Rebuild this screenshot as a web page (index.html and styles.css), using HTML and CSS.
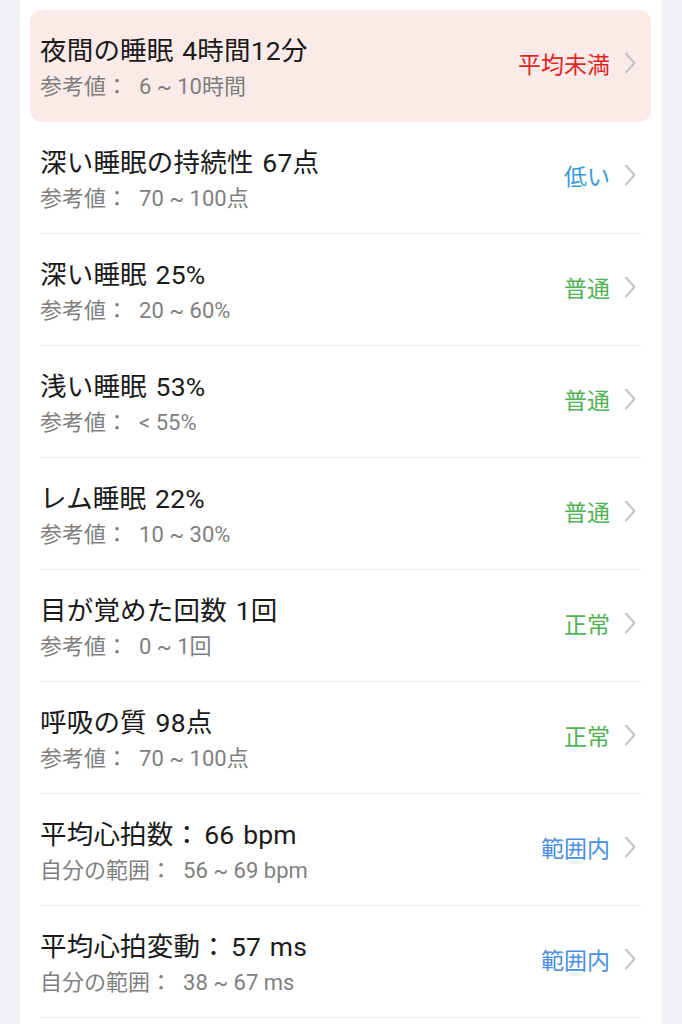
FILE: index.html
```html
<!DOCTYPE html>
<html lang="ja">
<head>
  <meta charset="UTF-8">
  <meta name="viewport" content="width=device-width, initial-scale=1.0">
  <title>睡眠の詳細</title>
  <link rel="stylesheet" href="styles.css">
</head>
<body>
<div class="card">
  <div class="row alert">
    <div class="row-inner">
      <div class="info">
        <div class="title">夜間の睡眠 4時間12分</div>
        <div class="ref">参考値：<span class="v">6 ~ 10時間</span></div>
      </div>
      <span class="status red">平均未満</span>
      <svg class="chev" viewBox="0 0 12 24"><path d="M1.5 2 L10.5 12 L1.5 22"/></svg>
    </div>
  </div>
  <div class="row">
    <div class="row-inner">
      <div class="info">
        <div class="title">深い睡眠の持続性 67点</div>
        <div class="ref">参考値：<span class="v">70 ~ 100点</span></div>
      </div>
      <span class="status low">低い</span>
      <svg class="chev" viewBox="0 0 12 24"><path d="M1.5 2 L10.5 12 L1.5 22"/></svg>
    </div>
  </div>
  <div class="row">
    <div class="row-inner">
      <div class="info">
        <div class="title">深い睡眠 25%</div>
        <div class="ref">参考値：<span class="v">20 ~ 60%</span></div>
      </div>
      <span class="status ok">普通</span>
      <svg class="chev" viewBox="0 0 12 24"><path d="M1.5 2 L10.5 12 L1.5 22"/></svg>
    </div>
  </div>
  <div class="row">
    <div class="row-inner">
      <div class="info">
        <div class="title">浅い睡眠 53%</div>
        <div class="ref">参考値：<span class="v">&lt; 55%</span></div>
      </div>
      <span class="status ok">普通</span>
      <svg class="chev" viewBox="0 0 12 24"><path d="M1.5 2 L10.5 12 L1.5 22"/></svg>
    </div>
  </div>
  <div class="row">
    <div class="row-inner">
      <div class="info">
        <div class="title">レム睡眠 22%</div>
        <div class="ref">参考値：<span class="v">10 ~ 30%</span></div>
      </div>
      <span class="status ok">普通</span>
      <svg class="chev" viewBox="0 0 12 24"><path d="M1.5 2 L10.5 12 L1.5 22"/></svg>
    </div>
  </div>
  <div class="row">
    <div class="row-inner">
      <div class="info">
        <div class="title">目が覚めた回数 1回</div>
        <div class="ref">参考値：<span class="v">0 ~ 1回</span></div>
      </div>
      <span class="status ok">正常</span>
      <svg class="chev" viewBox="0 0 12 24"><path d="M1.5 2 L10.5 12 L1.5 22"/></svg>
    </div>
  </div>
  <div class="row">
    <div class="row-inner">
      <div class="info">
        <div class="title">呼吸の質 98点</div>
        <div class="ref">参考値：<span class="v">70 ~ 100点</span></div>
      </div>
      <span class="status ok">正常</span>
      <svg class="chev" viewBox="0 0 12 24"><path d="M1.5 2 L10.5 12 L1.5 22"/></svg>
    </div>
  </div>
  <div class="row">
    <div class="row-inner">
      <div class="info">
        <div class="title">平均心拍数：<span class="v">66 bpm</span></div>
        <div class="ref">自分の範囲：<span class="v">56 ~ 69 bpm</span></div>
      </div>
      <span class="status range">範囲内</span>
      <svg class="chev" viewBox="0 0 12 24"><path d="M1.5 2 L10.5 12 L1.5 22"/></svg>
    </div>
  </div>
  <div class="row">
    <div class="row-inner">
      <div class="info">
        <div class="title">平均心拍変動：<span class="v">57 ms</span></div>
        <div class="ref">自分の範囲：<span class="v">38 ~ 67 ms</span></div>
      </div>
      <span class="status range">範囲内</span>
      <svg class="chev" viewBox="0 0 12 24"><path d="M1.5 2 L10.5 12 L1.5 22"/></svg>
    </div>
  </div>
</div>
</body>
</html>
```

FILE: styles.css
```css
/* Page */
body {
  margin: 0;
  padding: 0 21px 0 20px;
  background-color: #f1f2f5;
  font-family: Roboto, "Noto Sans CJK JP", sans-serif;
}

/* Card */
.card {
  background-color: #fff;
  padding: 10px 10px 20px;
  min-height: 1100px;
}

/* Rows */
.row {
  border-radius: 12px;
}

.row.alert {
  background-color: #fbebe8;
}

.row-inner {
  display: flex;
  align-items: center;
  margin: 0 10px;
  padding: 0 5px 0 0;
  height: 112px;
  box-sizing: border-box;
  border-bottom: 1px solid #ebebeb;
}

.row.alert .row-inner {
  border-bottom-color: transparent;
}

.info {
  flex: 1;
  padding-top: 6px;
}

.title {
  font-size: 26.5px;
  line-height: 36px;
  color: #1a1a1a;
  word-spacing: 2px;
  letter-spacing: 0.2px;
}

.title .v {
  margin-left: 4px;
}

.ref {
  font-size: 22px;
  line-height: 36px;
  color: #7f7f7f;
}

.ref .v {
  margin-left: 11px;
}

/* Status */
.status {
  font-size: 23px;
  margin-bottom: 6px;
}

.status.red { color: #e5231f; }
.status.low { color: #3a9ad8; }
.status.ok { color: #52b356; }
.status.range { color: #4a8fe0; }

.chev {
  width: 12px;
  height: 24px;
  margin-left: 14px;
  margin-bottom: 6px;
  fill: none;
  stroke: #c3c3c3;
  stroke-width: 2;
}
```
